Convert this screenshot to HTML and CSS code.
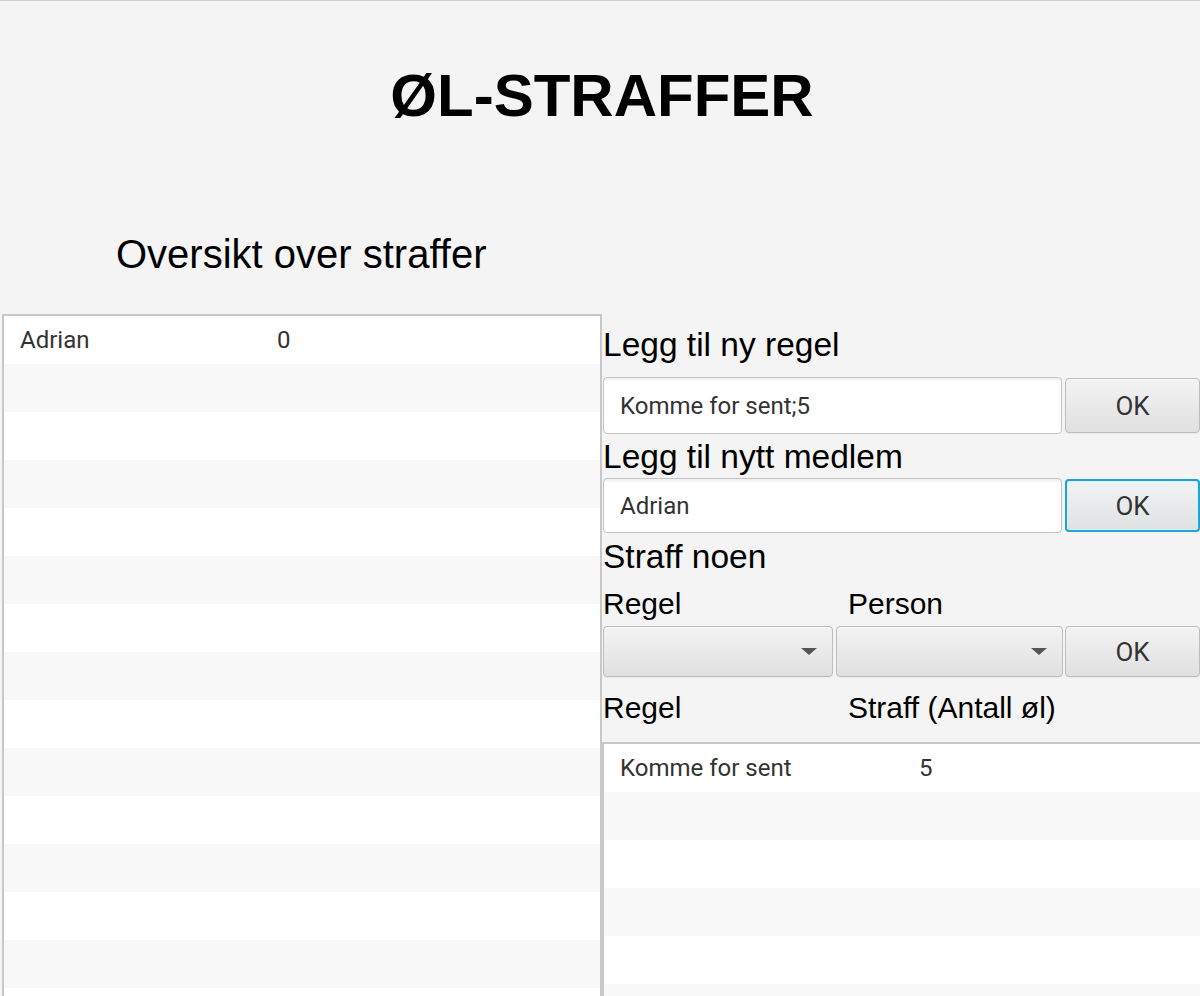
FILE: index.html
```html
<!DOCTYPE html>
<html lang="no">
<head>
<meta charset="utf-8">
<title>ØL-STRAFFER</title>
<link rel="stylesheet" href="styles.css">
</head>
<body>
<div class="window">
  <h1 class="title">ØL-STRAFFER</h1>
  <h2 class="subtitle">Oversikt over straffer</h2>
  <div class="main">
    <div class="table left-table">
      <div class="row"><span class="cell">Adrian</span><span class="cell">0</span></div>
      <div class="row"></div><div class="row"></div><div class="row"></div><div class="row"></div>
      <div class="row"></div><div class="row"></div><div class="row"></div><div class="row"></div>
      <div class="row"></div><div class="row"></div><div class="row"></div><div class="row"></div>
      <div class="row"></div><div class="row"></div>
    </div>
    <div class="panel">
      <div class="label big first">Legg til ny regel</div>
      <div class="field-row row-a">
        <div class="textfield">Komme for sent;5</div>
        <button class="btn">OK</button>
      </div>
      <div class="label big l2">Legg til nytt medlem</div>
      <div class="field-row row-b">
        <div class="textfield">Adrian</div>
        <button class="btn focused">OK</button>
      </div>
      <div class="label big l3">Straff noen</div>
      <div class="small-labels sl1"><span>Regel</span><span>Person</span></div>
      <div class="combo-row">
        <div class="combo c1"><span class="arrow"></span></div>
        <div class="combo c2"><span class="arrow"></span></div>
        <button class="btn">OK</button>
      </div>
      <div class="small-labels sl2"><span>Regel</span><span>Straff (Antall øl)</span></div>
      <div class="table right-table">
        <div class="row"><span class="cell">Komme for sent</span><span class="cell">5</span></div>
        <div class="row"></div><div class="row"></div><div class="row"></div><div class="row"></div><div class="row"></div>
      </div>
    </div>
  </div>
</div>
</body>
</html>
```

FILE: styles.css
```css
* { box-sizing: border-box; }

html, body {
  margin: 0;
  padding: 0;
  background: #f4f4f4;
}

.window {
  width: 1200px;
  height: 996px;
  overflow: hidden;
  border-top: 1px solid #cfcfcf;
  background: #f4f4f4;
  font-family: "Liberation Sans", Arial, sans-serif;
  color: #000;
}

.title {
  margin: 0;
  padding-top: 60px;
  padding-left: 4px;
  font-size: 60px;
  line-height: 70px;
  font-weight: bold;
  text-align: center;
}

.subtitle {
  margin: 100px 0 0 116px;
  font-size: 40px;
  line-height: 46px;
  font-weight: normal;
}

.main {
  margin-top: 37px;
  display: flex;
  align-items: flex-start;
}

/* tables */
.table {
  background: #fff;
  font-family: Roboto, "Liberation Sans", sans-serif;
  font-size: 24px;
  color: #333;
}

.row {
  height: 48px;
  display: grid;
  align-items: center;
}

.row:nth-child(even) { background: #f8f8f8; }

.cell { padding-left: 16px; white-space: nowrap; }

.left-table {
  margin-left: 2px;
  width: 600px;
  height: 720px;
  flex: 0 0 600px;
  border: 2px solid #c8c8c8;
}

.left-table .row { grid-template-columns: 257px 1fr; }

.right-table {
  margin-top: 17px;
  margin-left: -1px;
  width: 640px;
  height: 400px;
  border-top: 2px solid #c8c8c8;
  border-left: 2px solid #c8c8c8;
}

.right-table .row { grid-template-columns: 299px 1fr; }

/* right panel */
.panel {
  flex: 1;
  padding-left: 1px;
  padding-top: 11px;
  display: flex;
  flex-direction: column;
}

.label.big {
  font-size: 33.5px;
  line-height: 40px;
  height: 40px;
  white-space: nowrap;
}

.l2 { margin-top: 3px; }
.l3 { margin-top: 4px; }

.field-row {
  display: flex;
  align-items: center;
}

.row-a { margin-top: 12px; height: 57px; }
.row-b { margin-top: 1px; height: 55px; }

.textfield {
  flex: 0 0 459px;
  height: 100%;
  border: 1px solid #c4c4c4;
  border-radius: 4px;
  background: linear-gradient(#eeeeee 0, #ffffff 4px, #ffffff 100%);
  font-family: Roboto, "Liberation Sans", sans-serif;
  font-size: 24px;
  color: #333;
  display: flex;
  align-items: center;
  padding-left: 16px;
  white-space: nowrap;
}

.btn {
  flex: 0 0 135px;
  width: 135px;
  margin-left: 3px;
  padding: 0;
  border: 1px solid #bdbdbd;
  border-radius: 4px;
  background: linear-gradient(#f3f3f3, #e0e0e0);
  box-shadow: inset 0 1px 0 #fbfbfb, 0 1px 0 #e9e9e9;
  font-family: Roboto, "Liberation Sans", sans-serif;
  font-size: 26px;
  color: #333;
  display: flex;
  align-items: center;
  justify-content: center;
}

.row-a .btn { height: 55px; }
.row-b .btn {
  height: 53px;
}

.btn.focused {
  border: 2px solid #1fa4d8;
  box-shadow: inset 0 0 0 1px #d9eef8;
  background: linear-gradient(#f1f3f4, #dfe2e3);
}

.small-labels {
  display: grid;
  grid-template-columns: 245px 1fr;
  font-size: 30px;
  line-height: 34px;
  height: 34px;
  white-space: nowrap;
}

.sl1 { margin-top: 10px; }
.sl2 { margin-top: 14px; }

.combo-row {
  margin-top: 5px;
  height: 51px;
  display: flex;
}

.combo {
  position: relative;
  height: 51px;
  border: 1px solid #bdbdbd;
  border-radius: 4px;
  background: linear-gradient(#f3f3f3, #e0e0e0);
  box-shadow: inset 0 1px 0 #fbfbfb, 0 1px 0 #e9e9e9;
}

.combo.c1 { flex: 0 0 230px; }
.combo.c2 { flex: 0 0 227px; margin-left: 3px; }

.combo-row .btn { height: 51px; margin-left: 2px; }

.arrow {
  position: absolute;
  right: 15px;
  top: 21px;
  width: 0;
  height: 0;
  border-left: 8px solid transparent;
  border-right: 8px solid transparent;
  border-top: 7px solid #555;
}
```
